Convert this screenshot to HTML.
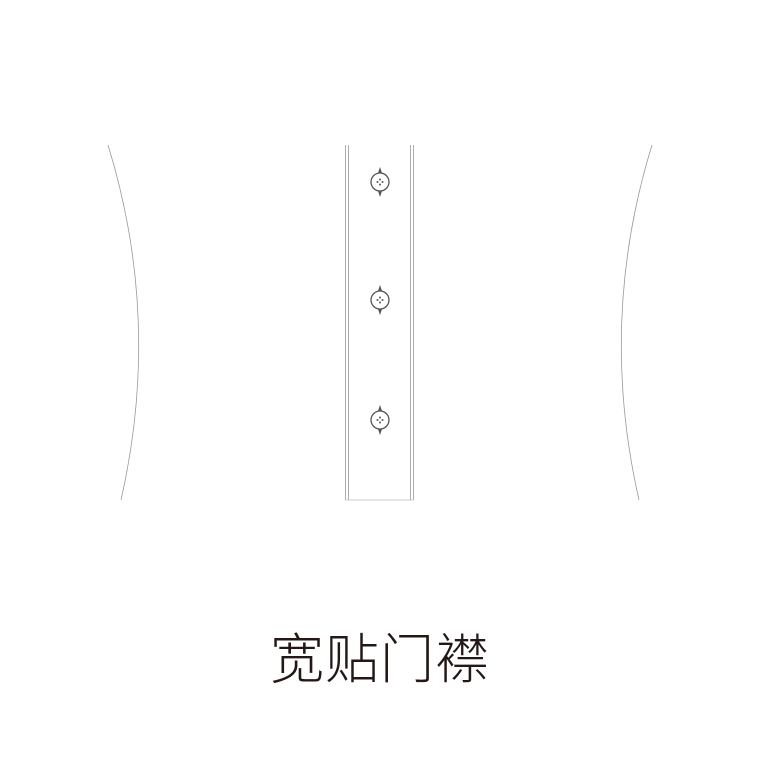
<!DOCTYPE html>
<html><head><meta charset="utf-8"><style>
body{margin:0;width:760px;height:760px;background:#fff;overflow:hidden;position:relative}
.t{position:absolute;left:0;width:760px;top:628px;text-align:center;font-family:"Liberation Sans","Noto Sans CJK SC",sans-serif;font-size:54px;font-weight:300;color:#231815;letter-spacing:1px;line-height:64px}
</style></head><body>
<svg width="760" height="760" style="position:absolute;left:0;top:0">
<g fill="none" stroke="#999" stroke-width="0.8">
<path d="M108,145 Q162,320 121,500"/>
<path d="M652,145 Q598,320 639,500"/>
<line x1="345.5" y1="145" x2="345.5" y2="500"/>
<line x1="348.5" y1="145" x2="348.5" y2="500"/>
<line x1="410.5" y1="145" x2="410.5" y2="500"/>
<line x1="413.5" y1="145" x2="413.5" y2="500"/>
<line x1="345.5" y1="500" x2="413.5" y2="500" stroke="#bbb"/>
</g>
<g id="b">
<circle cx="380" cy="182" r="9" fill="#fff" stroke="#555" stroke-width="1.3"/>
<path d="M378,173 L380,167 L382,173Z M378,191 L380,197 L382,191Z" fill="#555"/>
<circle cx="380" cy="179.5" r="1" fill="#555"/><circle cx="380" cy="184.5" r="1" fill="#555"/>
<circle cx="377.5" cy="182" r="1" fill="#555"/><circle cx="382.5" cy="182" r="1" fill="#555"/>
</g>
<use href="#b" y="118"/>
<use href="#b" y="238"/>
</svg>
<div class="t">宽贴门襟</div>
</body></html>
